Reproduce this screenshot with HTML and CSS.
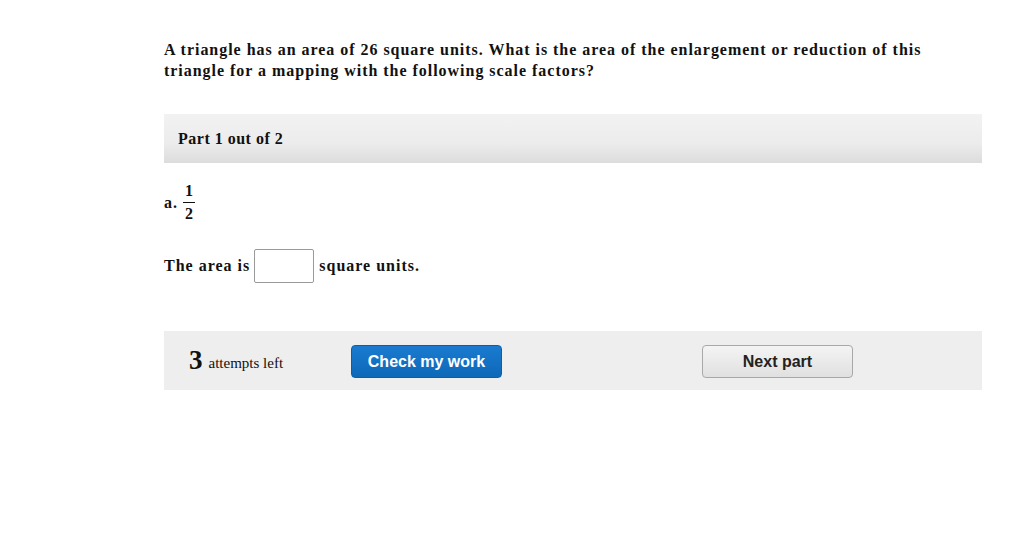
FILE: index.html
```html
<!DOCTYPE html>
<html>
<head>
<meta charset="utf-8">
<link rel="stylesheet" href="styles.css">
</head>
<body>
<div class="page">
  <p class="question">A triangle has an area of 26 square units. What is the area of the enlargement or reduction of this triangle for a mapping with the following scale factors?</p>
  <div class="part-header">Part 1 out of 2</div>
  <div class="item">
    <span class="label">a.</span>
    <span class="frac"><span class="num">1</span><span class="den">2</span></span>
  </div>
  <div class="answer">
    <span>The area is</span>
    <span class="box"></span>
    <span>square units.</span>
  </div>
  <div class="bar">
    <div class="attempts"><span class="count">3</span><span class="left">attempts left</span></div>
    <button class="btn-check">Check my work</button>
    <button class="btn-next">Next part</button>
  </div>
</div>
</body>
</html>
```
FILE: styles.css
```css
body {
  margin: 0;
  background: #fff;
  font-family: "Liberation Serif", "Times New Roman", serif;
  color: #111;
}
.page {
  margin-left: 164px;
  width: 818px;
  padding-top: 39px;
}
.question {
  margin: 0;
  font-weight: bold;
  font-size: 16px;
  letter-spacing: 0.97px;
  line-height: 21px;
  padding-right: 50px;
}
.part-header {
  margin-top: 33px;
  height: 49px;
  box-sizing: border-box;
  padding-left: 14px;
  display: flex;
  align-items: center;
  font-weight: bold;
  font-size: 16px;
  letter-spacing: 0.5px;
  background: linear-gradient(#f2f2f2 0%, #ececec 60%, #dcdcdc 100%);
}
.item {
  margin-top: 17px;
  display: flex;
  align-items: center;
  font-weight: bold;
  font-size: 16px;
  height: 44px;
}
.label {
  margin-right: 5px;
  position: relative;
  top: 1px;
  letter-spacing: 1px;
}
.frac {
  display: inline-flex;
  flex-direction: column;
  align-items: center;
  font-size: 16px;
  line-height: 17px;
}
.num {
  border-bottom: 1px solid #111;
  padding: 0 2px 3px;
}
.den {
  padding-top: 2px;
}
.answer {
  margin-top: 25px;
  display: flex;
  align-items: center;
  font-weight: bold;
  font-size: 16px;
  letter-spacing: 1px;
  height: 34px;
}
.box {
  width: 58px;
  height: 32px;
  border: 1px solid #9a9a9a;
  border-radius: 2px;
  margin: 0 5px 0 4px;
  background: #fff;
}
.bar {
  margin-top: 48px;
  height: 59px;
  background: #eeeeee;
  display: flex;
  align-items: center;
}
.attempts {
  margin-left: 25px;
  width: 162px;
  display: flex;
  align-items: baseline;
}
.count {
  font-weight: bold;
  font-size: 27px;
  margin-right: 6px;
}
.left {
  font-size: 15px;
  position: relative;
  top: -1px;
}
button {
  font-family: "Liberation Sans", Arial, sans-serif;
  font-weight: bold;
  font-size: 16px;
  width: 151px;
  height: 33px;
  border-radius: 4px;
  cursor: pointer;
  margin-top: 2px;
}
.btn-check {
  color: #fff;
  border: 1px solid #0a5fa8;
  background: linear-gradient(#1a7bd0, #0d68b8);
}
.btn-next {
  margin-left: 200px;
  color: #222;
  border: 1px solid #a8a8a8;
  background: linear-gradient(#f4f4f4, #e0e0e0);
}
```
